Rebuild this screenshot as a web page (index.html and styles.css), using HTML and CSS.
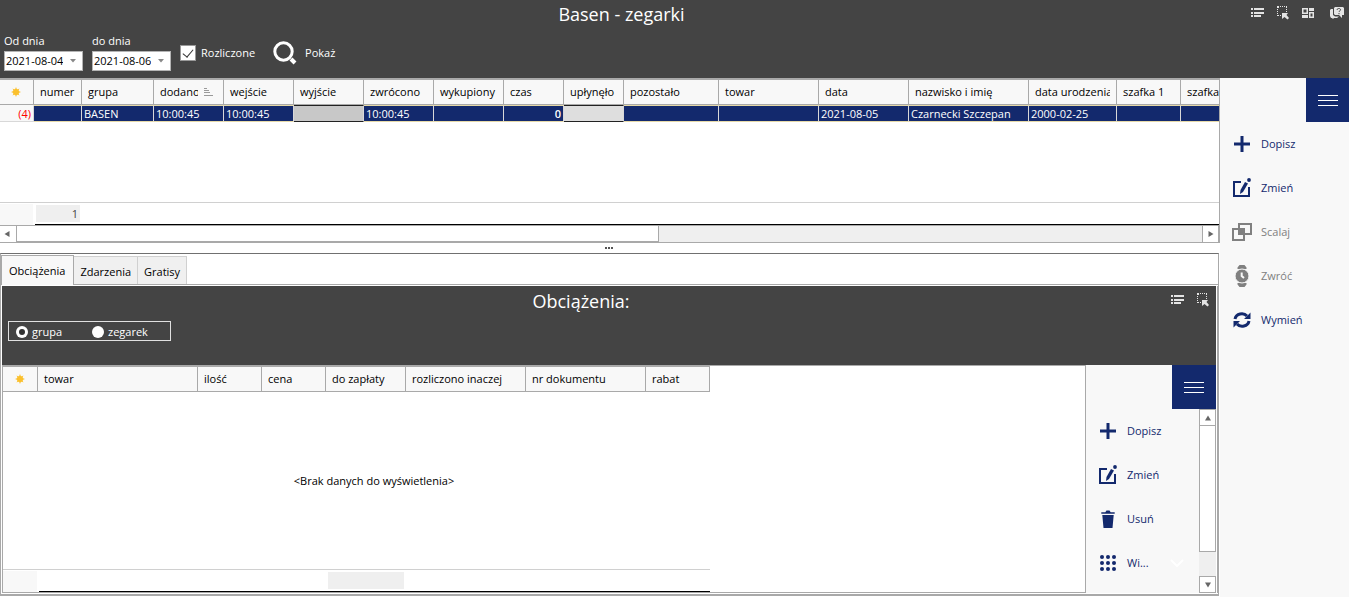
FILE: index.html
```html
<!DOCTYPE html>
<html lang="pl">
<head>
<meta charset="utf-8">
<title>Basen - zegarki</title>
<link rel="stylesheet" href="styles.css">
</head>
<body>
<svg class="sprite" aria-hidden="true">
  <symbol id="list" viewBox="0 0 14 10"><path d="M0 0h2v2H0zM3 0h10v2H3zM0 4h2v2H0zM3 4h10v2H3zM0 7h2v2H0zM3 7h7v2H3z"/></symbol>
  <symbol id="select" viewBox="0 0 12 14"><path d="M0 0h2v2H0zM3 0h1v1H3zM5 0h1v1H5zM7 0h1v1H7zM9 0h1v2H9zM0 3h1v1H0zM0 5h1v1H0zM0 7h1v1H0zM0 9h2v1H0zM3 9h1v1H3zM9 3h1v1H9zM9 5h1v1H9z"/><path d="M5 7h6L9.500 9l2.500 3-1.500 1.500-3-2.500L5 13z"/></symbol>
  <symbol id="tiles" viewBox="0 0 12 10"><path fill-rule="evenodd" d="M0 0h6v6H0zM1.500 1.500v3h3v-3zM7 0h5v3H7zM0 7h6v3H0zM7 4h5v6H7zM8.500 5.500v3h2v-3z"/></symbol>
  <symbol id="help" viewBox="0 0 14 12"><path d="M5 0h8l1 1v7h-2v3L9 8H5L4 7V1z"/><path d="M1 2h2v6l2 1.500h4L7 11H4l-1 1-1-1H1L0 9V3z"/><path class="ink" d="M7 3c0-2 4-2 3.500 0C10.300 4 9 4 9 5M9 6v1.200"/></symbol>
  <symbol id="sun" viewBox="0 0 12 12"><circle cx="6" cy="6" r="3"/><path d="M6 1l1.200 3H4.800zM6 11l1.200-3H4.800zM1 6l3-1.200v2.400zM11 6L8 4.800v2.400zM2.500 2.500L5 3.800 3.800 5zM9.500 2.500L8.200 5 7 3.800zM2.500 9.500L3.800 7 5 8.200zM9.500 9.500L7 8.200 8.200 7z"/></symbol>
  <symbol id="plus" viewBox="0 0 18 18"><path d="M7.500 1h3v6.500H17v3h-6.500V17h-3v-6.500H1v-3h6.500z"/></symbol>
  <symbol id="edit" viewBox="0 0 20 20"><path class="line" d="M9 4H2v14h15V9"/><path d="M13 4l3 1.500-5 8.500-3 2 .5-4z"/><circle cx="17" cy="2" r="1.900"/></symbol>
  <symbol id="merge" viewBox="0 0 20 18"><path class="line" d="M7 1h12v10H7zM1 6h11v11H1z"/><path d="M7 6h6v6H7z"/></symbol>
  <symbol id="watch" viewBox="0 0 14 22"><path d="M4.500 0h5l2 2.500V4h-9V2.500zM4.500 22h5l2-2.500V18h-9v1.500z"/><circle class="halo" cx="7" cy="11" r="7"/><path class="notch" d="M6.700 7.500V11L9 13"/></symbol>
  <symbol id="swap" viewBox="0 0 18 16"><path class="line bold" d="M2 7c1-5.500 8.500-7 12-3M16 9c-1 5.500-8.500 7-12 3"/><path d="M17.500.5V7H11zM.5 15.500V9H7z"/></symbol>
  <symbol id="trash" viewBox="0 0 14 18"><path d="M.3 2.200h4L5.500.5h3l1.200 1.700h4v1.600H.3zM1.300 5h11.400l-1.200 13h-9z"/></symbol>
  <symbol id="dots" viewBox="0 0 16 16"><circle cx="2" cy="2" r="2"/><circle cx="8" cy="2" r="2"/><circle cx="14" cy="2" r="2"/><circle cx="2" cy="8" r="2"/><circle cx="8" cy="8" r="2"/><circle cx="14" cy="8" r="2"/><circle cx="2" cy="14" r="2"/><circle cx="8" cy="14" r="2"/><circle cx="14" cy="14" r="2"/></symbol>
  <symbol id="search" viewBox="0 0 24 24"><circle class="line bold" cx="10.500" cy="10.500" r="8.700"/><path class="line wide" d="M18 18l4 4"/></symbol>
  <symbol id="left" viewBox="0 0 6 8"><path d="M5.500 1v6L.5 4z"/></symbol>
  <symbol id="right" viewBox="0 0 6 8"><path d="M.5 1v6l5-3z"/></symbol>
  <symbol id="up" viewBox="0 0 8 6"><path d="M1 5.500h6L4 .5z"/></symbol>
  <symbol id="down" viewBox="0 0 8 6"><path d="M1 .5h6l-3 5z"/></symbol>
  <symbol id="drop" viewBox="0 0 8 6"><path d="M1 1h6L4 4.500z"/></symbol>
  <symbol id="menu" viewBox="0 0 20 11"><path d="M0 0h20v1H0zM0 5h20v1H0zM0 10h20v1H0z"/></symbol>
</svg>

<header class="banner">
  <div class="banner-top">
    <h1 class="title">Basen - zegarki</h1>
    <div class="tools tools-main">
      <button class="tool" aria-label="Lista"><svg width="14" height="10"><use href="#list"/></svg></button>
      <button class="tool" aria-label="Zaznacz"><svg width="12" height="14"><use href="#select"/></svg></button>
      <button class="tool" aria-label="Kafelki"><svg width="12" height="10"><use href="#tiles"/></svg></button>
      <button class="tool tool-help" aria-label="Pomoc"><svg width="14" height="12"><use href="#help"/></svg></button>
    </div>
  </div>
  <form class="filters">
    <div class="field">
      <label for="from">Od dnia</label>
      <div class="datebox"><input id="from" type="text" value="2021-08-04"><button type="button" aria-label="Kalendarz od"><svg width="8" height="6"><use href="#drop"/></svg></button></div>
    </div>
    <div class="field">
      <label for="to">do dnia</label>
      <div class="datebox"><input id="to" type="text" value="2021-08-06"><button type="button" aria-label="Kalendarz do"><svg width="8" height="6"><use href="#drop"/></svg></button></div>
    </div>
    <label class="check"><input type="checkbox" checked>Rozliczone</label>
    <button class="show" type="button"><svg width="24" height="24"><use href="#search"/></svg>Pokaż</button>
  </form>
</header>

<div class="workspace">
  <main class="content">
    <section class="grid-top">
      <div class="grid-view">
        <table class="grid">
          <colgroup><col class="w34"><col class="w48"><col class="w72"><col class="w70"><col class="w70"><col class="w70"><col class="w70"><col class="w70"><col class="w60"><col class="w60"><col class="w95"><col class="w100"><col class="w90"><col class="w120"><col class="w88"><col class="w64"><col class="w64"></colgroup>
          <thead>
            <tr>
              <th class="mark"><svg width="12" height="12"><use href="#sun"/></svg></th>
              <th>numer</th><th>grupa</th>
              <th><div class="sorted"><span>dodano</span><svg width="9" height="8" viewBox="0 0 9 8"><path d="M0 0h3v1H0zM0 2h5v1H0zM0 4h6v1H0zM0 7h9v1H0z"/></svg></div></th>
              <th>wejście</th><th>wyjście</th><th>zwrócono</th><th>wykupiony</th><th>czas</th><th>upłynęło</th><th>pozostało</th><th>towar</th><th>data</th><th>nazwisko i imię</th>
              <th><div class="clip">data urodzenia</div></th><th>szafka 1</th><th>szafka 2</th>
            </tr>
          </thead>
          <tbody>
            <tr>
              <td class="count">(4)</td><td></td><td>BASEN</td><td>10:00:45</td><td>10:00:45</td><td class="off"></td><td>10:00:45</td><td></td><td class="num">0</td><td class="off pale"></td><td></td><td></td><td>2021-08-05</td><td>Czarnecki Szczepan</td><td>2000-02-25</td><td></td><td></td>
            </tr>
          </tbody>
        </table>
      </div>
      <div class="summary"><span class="summary-mark"></span><div class="summary-line"><output class="total">1</output></div></div>
      <div class="hscroll">
        <button class="arrow arrow-left" aria-label="W lewo"><svg width="6" height="8"><use href="#left"/></svg></button>
        <div class="htrack"><div class="hthumb"></div></div>
        <button class="arrow" aria-label="W prawo"><svg width="6" height="8"><use href="#right"/></svg></button>
      </div>
    </section>
    <div class="splitter"><i></i><i></i><i></i></div>
    <section class="pages">
      <div class="tabs" role="tablist">
        <button class="tab active" role="tab" aria-selected="true">Obciążenia</button>
        <button class="tab" role="tab">Zdarzenia</button>
        <button class="tab" role="tab">Gratisy</button>
      </div>
      <div class="page">
        <div class="banner banner-sub">
          <div class="banner-top">
            <h2 class="title">Obciążenia:</h2>
            <div class="tools tools-sub">
              <button class="tool" aria-label="Lista obciążeń"><svg width="14" height="10"><use href="#list"/></svg></button>
              <button class="tool" aria-label="Zaznacz obciążenia"><svg width="12" height="14"><use href="#select"/></svg></button>
            </div>
          </div>
          <div class="radios">
            <label><input type="radio" name="scope" checked>grupa</label>
            <label><input type="radio" name="scope">zegarek</label>
          </div>
        </div>
        <div class="split">
          <div class="grid-sub">
            <div class="sub-inner">
              <table class="grid">
                <colgroup><col class="w35"><col class="w160"><col class="w64"><col class="w64"><col class="w80"><col class="w120"><col class="w120"><col class="w64"></colgroup>
                <thead><tr>
                  <th class="mark"><svg width="12" height="12"><use href="#sun"/></svg></th>
                  <th>towar</th><th>ilość</th><th>cena</th><th>do zapłaty</th><th>rozliczono inaczej</th><th>nr dokumentu</th><th>rabat</th>
                </tr></thead>
              </table>
              <p class="empty">&lt;Brak danych do wyświetlenia&gt;</p>
              <div class="summary"><span class="summary-mark"></span><div class="summary-line"><output class="total total-pay"></output></div></div>
            </div>
          </div>
          <aside class="actions actions-sub">
            <button class="burger" aria-label="Menu obciążeń"><svg width="20" height="11"><use href="#menu"/></svg></button>
            <div class="actions-body">
              <div class="action-list">
                <button class="action"><svg width="18" height="18"><use href="#plus"/></svg>Dopisz</button>
                <button class="action"><svg width="20" height="20"><use href="#edit"/></svg>Zmień</button>
                <button class="action"><svg width="14" height="18"><use href="#trash"/></svg>Usuń</button>
                <button class="action"><svg width="16" height="16"><use href="#dots"/></svg>Wi...<svg class="chevron" width="14" height="8" viewBox="0 0 14 8"><path d="M1 1l6 6 6-6"/></svg></button>
              </div>
              <div class="vscroll">
                <button class="arrow" aria-label="W górę"><svg width="8" height="6"><use href="#up"/></svg></button>
                <div class="vtrack"><div class="vthumb"></div></div>
                <button class="arrow" aria-label="W dół"><svg width="8" height="6"><use href="#down"/></svg></button>
              </div>
            </div>
          </aside>
        </div>
      </div>
    </section>
  </main>
  <aside class="actions actions-main">
    <button class="burger" aria-label="Menu"><svg width="20" height="11"><use href="#menu"/></svg></button>
    <button class="action"><svg width="18" height="18"><use href="#plus"/></svg>Dopisz</button>
    <button class="action"><svg width="20" height="20"><use href="#edit"/></svg>Zmień</button>
    <button class="action" disabled><svg width="20" height="18"><use href="#merge"/></svg>Scalaj</button>
    <button class="action" disabled><svg width="14" height="22"><use href="#watch"/></svg>Zwróć</button>
    <button class="action"><svg width="18" height="16"><use href="#swap"/></svg>Wymień</button>
  </aside>
</div>
</body>
</html>
```

FILE: styles.css
```css
:root {
  --dark: #444;
  --navy: #13296d;
  --line: #a9a9a9;
  --panel: #f8f8f8;
  --track: #efefef;
}
* { box-sizing: border-box; }
body {
  margin: 0;
  height: 100vh;
  display: flex;
  flex-direction: column;
  font: 11px/16px "Open Sans", "Noto Sans", sans-serif;
  color: #000;
  background: #fff;
  overflow: hidden;
}
button, input { font: inherit; color: inherit; margin: 0; }
button { border: 0; padding: 0; background: none; }
svg { display: block; flex: none; fill: currentColor; }
.sprite { position: absolute; width: 0; height: 0; }
.line { fill: none; stroke: currentColor; stroke-width: 2; }
.bold { stroke-width: 3; }
.wide { stroke-width: 4; }
.ink { fill: none; stroke: var(--dark); }
.notch { fill: none; stroke: var(--panel); stroke-width: 2; }
.halo { stroke: var(--panel); }

.banner { background: var(--dark); color: #fff; flex: none; min-height: 78px; }
.banner-top { display: flex; height: 28px; }
.title { flex: 1; margin: 0; text-align: center; font-size: 18px; font-weight: 400; line-height: 28px; }
.tools { display: flex; flex: none; color: #e4e4e4; }
.tools-main { width: 106px; padding-left: 2px; }
.tools-sub { width: 56px; padding-left: 5px; }
.tool { flex: none; width: 25px; height: 26px; display: grid; place-items: center; }
.tool-help { width: 29px; padding-left: 5px; }

.filters { display: flex; align-items: center; padding: 5px 4px 0; }
.field { width: 88px; }
.field label { display: block; }
.datebox { display: flex; width: 79px; height: 20px; margin-top: 2px; background: #fff; border: 1px solid #b4b4b4; color: #000; }
.datebox input { flex: 1; min-width: 0; border: 0; padding: 0 1px; background: none; }
.datebox button { width: 18px; display: grid; place-items: center; color: #888; }
.check { display: flex; align-items: center; gap: 5px; padding-top: 2px; }
.check input {
  appearance: none; width: 16px; height: 16px; background: #fff; border: 1px solid #999;
  display: grid; place-items: center;
}
.check input:checked::before { content: ""; width: 9px; height: 5px; border: solid #333; border-width: 0 0 1px 1px; rotate: -50deg; translate: 0 -1px; }
.show { display: flex; align-items: center; gap: 8px; margin-left: 18px; padding-top: 2px; }

.workspace { flex: 1; min-height: 0; display: flex; }
.content { flex: 1; min-width: 0; display: flex; flex-direction: column; }

.grid-top { flex: none; height: 165px; display: flex; flex-direction: column; border: solid var(--line); border-width: 2px 1px 1px 0; }
.grid-view { flex: 1; min-height: 0; overflow: hidden; }
.grid { table-layout: fixed; width: 0; border-collapse: separate; border-spacing: 0; }
.grid th, .grid td { text-align: left; font-weight: 400; white-space: nowrap; overflow: hidden; border-right: 1px solid var(--line); }
.grid th { height: 25px; padding: 0 0 0 6px; background: var(--panel); border-bottom: 1px solid var(--line); }
.grid .mark { color: #fbc02d; padding: 0 0 0 10px; }
.grid td { height: 17px; padding: 0 2px; line-height: 15px; color: #fff; background: var(--navy); border-right-color: #d8d8d8; border-top: 1px solid #e6d9a8; border-bottom: 1px solid #e6d9a8; }
.grid .count { color: #f00; background: var(--panel); text-align: right; border-color: #d8d8d8; border-top-color: var(--panel); }
.grid .num { text-align: right; font-weight: 600; }
.grid .off { background: #c8c8c8; border-top-color: #222; border-bottom-color: #222; }
.grid .pale { background: #dedede; }
.sorted { display: flex; align-items: center; gap: 6px; }
.sorted span { width: 38px; overflow: hidden; }
.sorted svg { fill: #999; }
.clip { width: 75px; overflow: hidden; }
.w34 { width: 34px; } .w35 { width: 35px; } .w48 { width: 48px; } .w60 { width: 60px; }
.w64 { width: 64px; } .w70 { width: 70px; } .w72 { width: 72px; } .w80 { width: 80px; }
.w88 { width: 88px; } .w90 { width: 90px; } .w95 { width: 95px; } .w100 { width: 100px; }
.w120 { width: 120px; } .w160 { width: 160px; }

.summary { display: flex; flex: none; height: 23px; border-top: 1px solid #d0d0d0; }
.summary-mark { width: 33px; margin: 1px 2px 0 0; background: var(--panel); }
.summary-line { flex: 1; border-bottom: 1px solid #000; padding: 2px 1px; }
.total { display: block; width: 44px; height: 17px; padding-right: 2px; line-height: 18px; text-align: right; color: #444; background: var(--track); }
.total-pay { width: 76px; margin-left: 288px; }

.arrow { display: grid; place-items: center; flex: none; width: 17px; height: 17px; background: #fff; border: 1px solid var(--line); color: #666; }
.hscroll { display: flex; flex: none; height: 17px; border-top: 1px solid var(--line); background: var(--track); }
.hscroll .arrow { height: 16px; border-width: 0 1px; }
.hscroll .arrow-left { border-left: 0; padding-right: 3px; }
.htrack { flex: 1; }
.hthumb { width: 54.200%; height: 16px; background: #fff; border: solid var(--line); border-width: 0 1px 1px 0; }

.splitter { flex: none; height: 10px; display: flex; justify-content: center; align-items: center; gap: 1px; padding-right: 3px; }
.splitter i { width: 2px; height: 2px; background: #555; }

.pages { flex: 1; min-height: 0; display: flex; flex-direction: column; margin: 0 1px 1px 0; border: solid var(--line); border-width: 1px 1px 2px; border-top-color: #707070; }
.tabs { display: flex; align-items: flex-end; flex: none; height: 31px; border-bottom: 1px solid var(--line); }
.tab { height: 28px; padding: 3px 6px 0; background: #f0f0f0; border: 1px solid #d0d0d0; border-bottom: 0; border-left: 0; }
.tab.active { height: 30px; padding: 0 8px 0 7px; margin-bottom: -1px; background: var(--panel); border: 1px solid var(--line); border-bottom: 0; }
.page { flex: 1; min-height: 0; display: flex; flex-direction: column; margin: 1px 0 1px 1px; border-right: 1px solid var(--line); padding-right: 1px; }
.banner-sub { min-height: 79px; padding-top: 1px; }
.radios { display: flex; align-items: center; width: 163px; height: 20px; margin: 6px 0 0 6px; padding: 1px 0 0 7px; border: 1px solid #e0e0e0; }
.radios label { display: flex; align-items: center; gap: 4px; width: 76px; }
.radios input { appearance: none; width: 12px; height: 12px; border-radius: 50%; background: #fff; display: grid; place-items: center; }
.radios input:checked::before { content: ""; width: 6px; height: 6px; border-radius: 50%; background: #333; }

.split { flex: 1; min-height: 0; display: flex; }
.grid-sub { flex: 1; min-width: 0; border: 1px solid var(--line); display: flex; }
.sub-inner { width: 707px; display: flex; flex-direction: column; }
.sub-inner .grid { border-top: 1px solid var(--line); }
.sub-inner .mark { padding-left: 11px; }
.sub-inner .summary-mark { width: 34px; }
.empty { flex: 1; margin: 0; padding: 1px 0 0 35px; display: grid; place-items: center; }

.actions { flex: none; background: var(--panel); display: flex; flex-direction: column; color: var(--navy); }
.actions-main { width: 129px; }
.actions-sub { width: 130px; }
.burger { flex: none; align-self: flex-end; width: 44px; height: 44px; display: grid; place-items: center; background: var(--navy); color: #fff; }
.actions-main .burger { width: 43px; }
.action { display: grid; grid-template-columns: 24px auto 1fr; align-items: center; gap: 7px; width: 100%; height: 44px; padding-left: 10px; text-align: left; white-space: nowrap; }
.action svg { justify-self: center; }
.action:disabled { color: #808080; }
.actions-body { flex: 1; min-height: 0; display: flex; }
.action-list { flex: 1; min-width: 0; overflow: hidden; }
.action .chevron { fill: none; stroke: #fff; stroke-width: 2; }
.vscroll { width: 17px; display: flex; flex-direction: column; background: var(--track); }
.vtrack { flex: 1; }
.vthumb { height: 84%; background: #fff; border: 1px solid var(--line); border-top-width: 0; }
```
